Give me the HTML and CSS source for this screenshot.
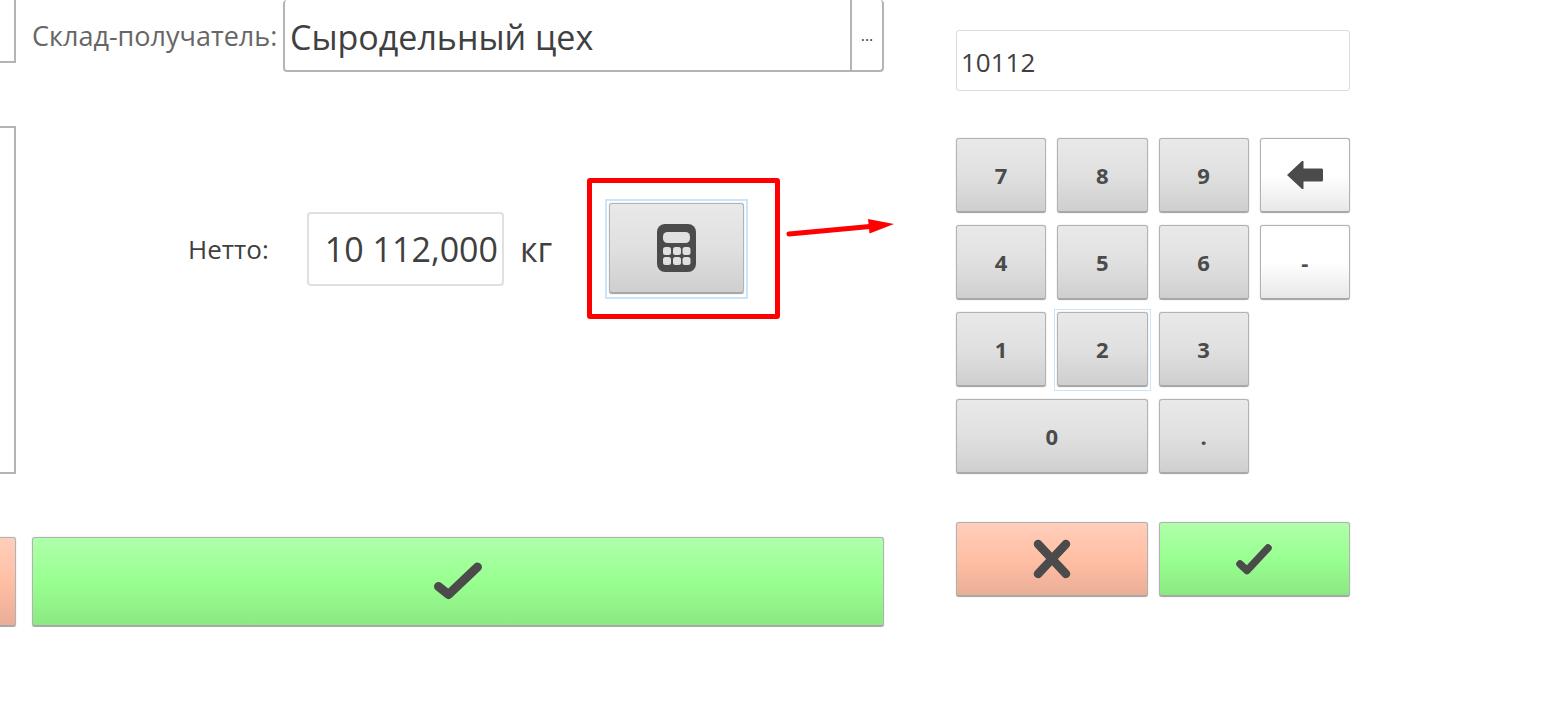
FILE: index.html
```html
<!DOCTYPE html>
<html lang="ru">
<head>
<meta charset="utf-8">
<title>Склад-получатель</title>
<link rel="stylesheet" href="styles.css">
</head>
<body>
<div class="page">
  <aside class="edge">
    <div class="edge-field"></div>
    <div class="edge-list"></div>
    <button class="btn btn-cancel edge-cancel" type="button" aria-label="Отмена"></button>
  </aside>

  <main class="form">
    <div class="recipient">
      <label class="label recipient-label" for="recipient">Склад-получатель:</label>
      <div class="picker">
        <input class="picker-input" id="recipient" type="text" value="Сыродельный цех">
        <button class="picker-more" type="button" aria-label="Выбрать">...</button>
      </div>
    </div>

    <div class="weight">
      <label class="label weight-label" for="netto">Нетто:</label>
      <input class="weight-input" id="netto" type="text" value="10 112,000">
      <span class="unit">кг</span>
      <div class="callout">
        <button class="btn btn-grey calc focused" type="button" aria-label="Калькулятор">
          <svg width="40" height="48" viewBox="0 0 40 48">
            <rect width="39" height="48" rx="8" fill="#4b4b4b"/>
            <g fill="#e0e0e0">
              <rect x="6" y="8" width="27" height="11" rx="4.500"/>
              <rect x="6" y="23" width="8" height="8" rx="2.500"/>
              <rect x="16" y="23" width="8" height="8" rx="2.500"/>
              <rect x="25.500" y="23" width="8" height="8" rx="2.500"/>
              <rect x="6" y="33" width="8" height="8" rx="2.500"/>
              <rect x="16" y="33" width="8" height="8" rx="2.500"/>
              <rect x="25.500" y="33" width="8" height="8" rx="2.500"/>
            </g>
          </svg>
        </button>
        <svg class="arrow" width="108" height="24" viewBox="0 0 108 24">
          <path d="M3 18 84 10.500" stroke="#f00" stroke-width="5" stroke-linecap="round"/>
          <path d="M82 3 108 8 83.500 17.500Z" fill="#f00"/>
        </svg>
      </div>
    </div>

    <button class="btn btn-ok form-ok" type="button" aria-label="Подтвердить">
      <svg width="50" height="40" viewBox="0 0 50 40" fill="none" stroke="#4b4b4b" stroke-width="9" stroke-linecap="round" stroke-linejoin="round">
        <path d="M5.500 24.500 15.500 32.500 44.500 5"/>
      </svg>
    </button>
  </main>

  <section class="keypad" aria-label="Цифровая клавиатура">
    <input class="display" type="text" value="10112" aria-label="Значение">
    <div class="keys">
      <button class="btn btn-grey" type="button">7</button>
      <button class="btn btn-grey" type="button">8</button>
      <button class="btn btn-grey" type="button">9</button>
      <button class="btn btn-white" type="button" aria-label="Стереть">
        <svg width="36" height="28" viewBox="0 0 36 28"><path d="M0 14 15 0H16.500V7.500H35L36 8.500V19.500L35 20.500H16.500V28H15Z" fill="#4b4b4b"/></svg>
      </button>
      <button class="btn btn-grey" type="button">4</button>
      <button class="btn btn-grey" type="button">5</button>
      <button class="btn btn-grey" type="button">6</button>
      <button class="btn btn-white" type="button">-</button>
      <button class="btn btn-grey" type="button">1</button>
      <button class="btn btn-grey focused focused-key" type="button">2</button>
      <button class="btn btn-grey" type="button">3</button>
      <button class="btn btn-grey zero" type="button">0</button>
      <button class="btn btn-grey" type="button">.</button>
    </div>
    <div class="actions">
      <button class="btn btn-cancel" type="button" aria-label="Отмена">
        <svg width="38" height="40" viewBox="0 0 38 40" stroke="#4b4b4b" stroke-width="8.500" stroke-linecap="round"><path d="M5 5 33 35M33 5 5 35"/></svg>
      </button>
      <button class="btn btn-ok" type="button" aria-label="Готово">
        <svg width="38" height="32" viewBox="0 0 38 32" fill="none" stroke="#4b4b4b" stroke-width="7.500" stroke-linecap="round" stroke-linejoin="round"><path d="M5 21 12 27.500 33 5"/></svg>
      </button>
    </div>
  </section>
</div>
</body>
</html>
```
FILE: styles.css
```css
* {
  box-sizing: border-box;
}

body {
  margin: 0;
  background: #fff;
  color: #404040;
  font-family: "Open Sans", "Noto Sans", sans-serif;
}

input,
button {
  margin: 0;
  font-family: inherit;
  color: inherit;
}

.page {
  display: flex;
  align-items: flex-start;
  overflow: hidden;
}

.page::after {
  content: "";
  flex: 207 1 0;
}

/* Left neighbour column, cut off by the window edge */
.edge {
  flex: none;
  width: 16px;
  display: flex;
  flex-direction: column;
}

.edge-field,
.edge-list {
  border: 2px solid #b4b4b4;
  border-left: 0;
}

.edge-field {
  height: 63px;
  border-top: 0;
}

.edge-list {
  height: 348px;
  margin: 63px 0;
}

.btn.edge-cancel {
  height: 90px;
  border-left: 0;
  border-radius: 0 3px 3px 0;
}

.form {
  flex: 852 1 0;
  min-width: 0;
  margin-left: 16px;
  display: flex;
  flex-direction: column;
}

.label {
  font-size: 26px;
  line-height: 36px;
  white-space: nowrap;
}

.recipient {
  display: flex;
  align-items: center;
  height: 72px;
}

.recipient-label {
  flex: none;
  width: 251px;
  color: #666;
  font-size: 27px;
}

.picker {
  flex: 1;
  min-width: 0;
  align-self: stretch;
  display: flex;
  border: 2px solid #b4b4b4;
  border-top: 0;
  border-radius: 4px;
}

.picker-input {
  flex: 1;
  min-width: 0;
  padding: 4px 5px 0;
  border: 0;
  background: none;
  font-size: 34px;
}

.picker-more {
  width: 32px;
  padding: 0;
  border: 0;
  border-left: 2px solid #b4b4b4;
  background: none;
  font-size: 16px;
}

.weight {
  display: flex;
  align-items: center;
  height: 141px;
  margin: 106px 0 218px;
  padding-left: 156px;
}

.weight-label {
  flex: none;
  width: 119px;
}

.weight-input {
  width: 197px;
  height: 74px;
  padding: 0 4px;
  border: 2px solid #e0e0e0;
  border-radius: 4px;
  background: #fff;
  font-size: 34px;
  text-align: right;
}

.unit {
  width: 83px;
  padding-left: 16px;
  font-size: 34px;
}

.callout {
  position: relative;
  flex: none;
  padding: 20px 31px 20px 17px;
  border: 5px solid #f00;
  border-radius: 3px;
}

.arrow {
  position: absolute;
  left: 100%;
  top: 33px;
  margin-left: 11px;
}

.btn {
  display: flex;
  align-items: center;
  justify-content: center;
  padding: 0;
  border: 1px solid #b2b2b2;
  border-bottom: 2px solid #a8a8a8;
  border-radius: 3px;
  box-shadow: 0 0 1px #999;
  color: #4b4b4b;
  font-size: 22px;
  font-weight: 700;
}

.btn-grey {
  background: linear-gradient(#e9e9e9, #e0e0e0 50%, #cfcfcf);
}

.btn-white {
  background: linear-gradient(#fff 50%, #e8e8e8);
}

.btn-ok {
  background: linear-gradient(#afffaa, #99ff90 50%, #8be983);
}

.btn-cancel {
  background: linear-gradient(#ffceba, #ffbfa5 50%, #eaad96);
}

/* Square focus frame around a rounded button */
.focused {
  position: relative;
}

.focused::after {
  content: "";
  position: absolute;
  inset: -5px -5px -7px;
  border: 2px solid #cce4fa;
}

.focused-key::after {
  inset: -4px -4px -6px;
  border-width: 1px;
}

.calc {
  width: 135px;
  height: 91px;
}

.form-ok {
  height: 90px;
}

.keypad {
  flex: 394 1 0;
  min-width: 0;
  margin-left: 72px;
  padding-top: 30px;
}

.display {
  display: block;
  width: 100%;
  height: 61px;
  margin-bottom: 47px;
  padding: 3px 4px 0;
  border: 1px solid #dcdcdc;
  border-radius: 3px;
  background: #fff;
  font-size: 26px;
}

.keys {
  display: grid;
  grid-template-columns: repeat(4, 1fr);
  grid-auto-rows: 75px;
  gap: 12px 11px;
}

.zero {
  grid-column: 1 / span 2;
}

.actions {
  display: grid;
  grid-template-columns: 1fr 1fr;
  grid-auto-rows: 75px;
  gap: 11px;
  margin-top: 48px;
}
```
